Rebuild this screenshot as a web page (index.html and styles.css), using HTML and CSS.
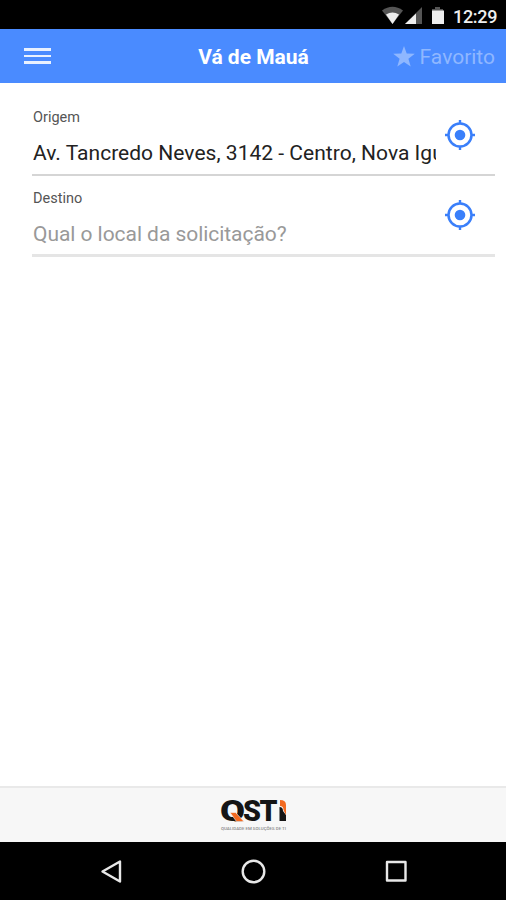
FILE: index.html
```html
<!DOCTYPE html>
<html lang="pt-BR">
<head>
<meta charset="utf-8">
<title>Vá de Mauá</title>
<link rel="stylesheet" href="styles.css">
</head>
<body>
<div class="status">
  <svg class="status-icons" width="64" height="20" viewBox="0 0 64 20">
    <path fill="#555" d="M0 4.500Q10.500-3 21 4.500L10.500 18Z"/>
    <path fill="#eee" d="M4 8.500Q10.500 4.500 17 8.500L10.500 18Z"/>
    <path fill="#555" d="M40 1V18H23Z"/>
    <path fill="#eee" d="M34 7.500V18H23Z"/>
    <path fill="#555" d="M53 1h5v2h3v4H50V3h3z"/>
    <path fill="#eee" d="M50 4.500h12V18H50z"/>
  </svg>
  <span class="clock">12:29</span>
</div>
<header class="bar">
  <div class="menu"><i></i><i></i><i></i></div>
  <h1>Vá de Mauá</h1>
  <div class="fav">
    <svg width="22" height="21" viewBox="0 0 22 21"><path fill="currentColor" d="M11 0l2.700 7.500 8.100.3-6.400 4.900 2.300 7.800L11 16l-6.700 4.500 2.300-7.800L.2 7.800l8.100-.3z"/></svg>
    <span>Favorito</span>
  </div>
</header>
<main>
  <section class="field">
    <div class="copy">
      <label>Origem</label>
      <div class="value">Av. Tancredo Neves, 3142 - Centro, Nova Iguaçu</div>
    </div>
    <svg class="locate" width="30" height="30" viewBox="0 0 30 30"><circle cx="15" cy="15" r="11.500" fill="none" stroke="#3a7ffa" stroke-width="2.500"/><circle cx="15" cy="15" r="5.300" fill="#3a7ffa"/><path d="M15 0v4M15 26v4M0 15h4M26 15h4" stroke="#3a7ffa" stroke-width="2.400"/></svg>
  </section>
  <section class="field second">
    <div class="copy">
      <label>Destino</label>
      <div class="value hint">Qual o local da solicitação?</div>
    </div>
    <svg class="locate" width="30" height="30" viewBox="0 0 30 30"><circle cx="15" cy="15" r="11.500" fill="none" stroke="#3a7ffa" stroke-width="2.500"/><circle cx="15" cy="15" r="5.300" fill="#3a7ffa"/><path d="M15 0v4M15 26v4M0 15h4M26 15h4" stroke="#3a7ffa" stroke-width="2.400"/></svg>
  </section>
</main>
<footer class="brand">
  <svg width="68" height="36" viewBox="0 0 68 36">
    <text class="logo" x="0" y="23" textLength="25" lengthAdjust="spacingAndGlyphs">Q</text>
    <text class="logo" x="23" y="23" textLength="18" lengthAdjust="spacingAndGlyphs">S</text>
    <text class="logo" x="39.500" y="23" textLength="18" lengthAdjust="spacingAndGlyphs">T</text>
    <path fill="#f7f7f7" d="M15 23.500h10v5H15z"/>
    <path fill="#f36a21" stroke="#f7f7f7" stroke-width=".6" d="M10 14.500h5.500l8.500 9h-7.500z"/>
    <path fill="#151515" d="M59.500 9q3.500 0 3.500 4l3 4v6h-6.500z"/>
    <path fill="#f36a21" d="M60 2q6 0 6 5v10l-2.500-5q0-4-3.500-4z"/>
    <text class="tag" x="1" y="31.500" textLength="65" lengthAdjust="spacingAndGlyphs">QUALIDADE EM SOLUÇÕES DE TI</text>
  </svg>
</footer>
<nav>
  <svg width="506" height="58" viewBox="0 0 506 58" fill="none" stroke="#e8e8e8" stroke-width="2.400" stroke-linejoin="round">
    <path d="M120 19.500V39.500L102.500 29.500Z"/>
    <circle cx="253.500" cy="29.500" r="10.800"/>
    <rect x="387" y="20" width="18.500" height="18.500"/>
  </svg>
</nav>
</body>
</html>
```
FILE: styles.css
```css
* { box-sizing: border-box; }
body {
  margin: 0;
  height: 900px;
  display: flex;
  flex-direction: column;
  background: #fff;
  font-family: Roboto, "Liberation Sans", sans-serif;
  overflow: hidden;
}
.status {
  height: 29px;
  background: #000;
  color: #eee;
  display: flex;
  justify-content: flex-end;
  padding: 6px 9px 0 0;
}
.status-icons { margin-right: 7px; }
.clock { font-size: 18px; line-height: 21px; font-weight: 500; width: 44px; white-space: nowrap; letter-spacing: -.3px; }
.bar {
  height: 54px;
  background: #4a8bff;
  display: grid;
  grid-template-columns: 1fr auto 1fr;
  align-items: center;
  padding: 0 11px 0 24px;
  color: #fff;
}
.menu { width: 27px; display: grid; gap: 4px; }
.menu i { height: 2.500px; background: #e9f1ff; }
h1 { margin: 2px 12px 0 0; font-size: 21px; line-height: 26px; font-weight: 700; }
.fav { display: flex; justify-content: flex-end; align-items: center; gap: 5px; color: #8fb7ff; font-size: 21px; padding-top: 1px; }
main { flex: 1; padding: 0 11px 0 32px; }
.field {
  height: 93px;
  display: flex;
  justify-content: space-between;
  border-bottom: 2px solid #d5d5d5;
  padding: 25px 20px 0 1px;
}
.second { height: 81px; padding-top: 13px; border-bottom: 3px solid #e5e5e5; }
.copy { width: 403px; }
label { display: block; font-size: 14.500px; line-height: 20px; color: #555; }
.value { margin-top: 12px; font-size: 21px; line-height: 26px; color: #222; white-space: nowrap; overflow: hidden; letter-spacing: .02px; }
.hint { color: #999; letter-spacing: -.05px; }
.locate { margin-top: 12px; flex: none; }
.second .locate { margin-top: 11px; }
.brand { height: 56px; background: #f7f7f7; border-top: 2px solid #e9e9e9; display: flex; justify-content: center; padding: 10px 0 0 2px; }
.logo { font: 900 29px Roboto, sans-serif; fill: #151515; }
.tag { font: 500 4px Roboto, sans-serif; fill: #888; }
nav { height: 58px; background: #000; }
nav svg { display: block; }
```
